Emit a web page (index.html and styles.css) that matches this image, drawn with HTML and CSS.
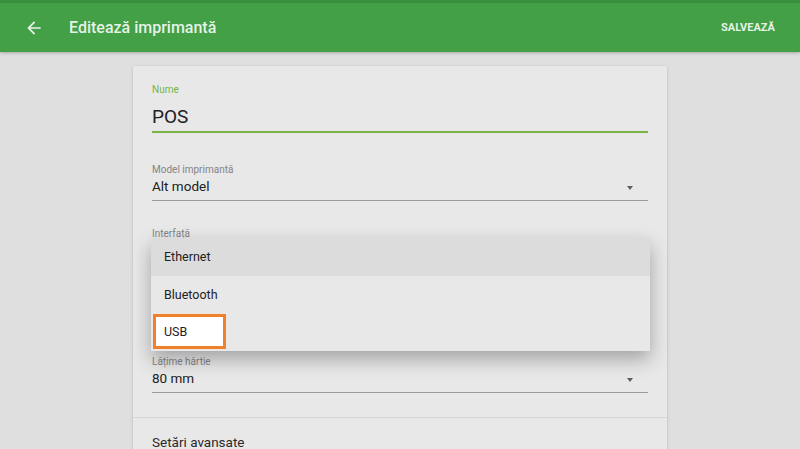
FILE: index.html
```html
<!DOCTYPE html>
<html lang="ro">
<head>
    <meta charset="UTF-8">
    <meta name="viewport" content="width=device-width, initial-scale=1.0">
    <title>Editează imprimantă</title>
    <link rel="stylesheet" href="styles.css">
</head>
<body>
    <header class="appbar">
        <button class="back" aria-label="Înapoi">
            <svg viewBox="0 0 24 24" width="20" height="20"><path d="M20 11H7.83l5.59-5.59L12 4l-8 8 8 8 1.41-1.41L7.83 13H20v-2z" fill="currentColor"/></svg>
        </button>
        <h1>Editează imprimantă</h1>
        <button class="action">Salvează</button>
    </header>

    <main class="page">
        <div class="card">
            <div class="form">
                <div class="field field-text">
                    <label>Nume</label>
                    <div class="value">POS</div>
                </div>
                <div class="field">
                    <label>Model imprimantă</label>
                    <div class="value">Alt model <span class="caret"></span></div>
                </div>
                <!-- select is open, the menu sits on top of it -->
                <div class="field field-open">
                    <label>Interfață</label>
                    <div class="value"><span class="caret"></span></div>
                </div>
                <div class="field">
                    <label>Lățime hârtie</label>
                    <div class="value">80 mm <span class="caret"></span></div>
                </div>
            </div>
            <div class="section">Setări avansate</div>

            <ul class="menu">
                <li class="active">Ethernet</li>
                <li>Bluetooth</li>
                <li class="marked">USB</li>
            </ul>
        </div>
    </main>
</body>
</html>
```

FILE: styles.css
```css
body {
    margin: 0;
    font-family: Roboto, "Noto Sans", sans-serif;
    background: #dfdfdf;
    color: #212121;
    overflow: hidden;
}
.appbar {
    box-sizing: border-box;
    height: 52px;
    display: flex;
    align-items: center;
    background: #43a047;
    border-top: 3px solid #388e3c;
    box-shadow: 0 1px 3px rgba(0, 0, 0, 0.25);
    color: rgba(255, 255, 255, 0.88);
    position: relative;
}
.appbar button {
    background: none;
    border: 0;
    color: inherit;
    font-family: inherit;
    padding: 0;
}
.back {
    display: flex;
    margin-left: 24px;
    width: 20px;
    height: 20px;
}
.appbar h1 {
    flex: 1;
    margin: 0 0 0 25px;
    font-size: 16px;
    font-weight: 500;
}
.action {
    margin-right: 25px;
    font-size: 11px;
    font-weight: 700;
    text-transform: uppercase;
}
.page {
    padding-top: 14px;
}
.card {
    position: relative;
    width: 534px;
    margin: 0 auto;
    background: #e8e8e8;
    box-shadow: 0 1px 3px rgba(0, 0, 0, 0.18);
    min-height: 400px;
}
.form {
    padding: 18px 19px 24px;
}
.field {
    margin-top: 27px;
    border-bottom: 1px solid #9a9a9a;
    padding-bottom: 4px;
}
.field label {
    display: block;
    font-size: 10px;
    line-height: 12px;
    color: #848484;
}
.field .value {
    display: flex;
    align-items: center;
    height: 20px;
    font-size: 13.5px;
    line-height: 20px;
}
.caret {
    margin-left: auto;
    margin-right: 15px;
    margin-top: 4px;
    border-left: 3.5px solid transparent;
    border-right: 3.5px solid transparent;
    border-top: 4px solid #5f5f5f;
}
.field-text {
    margin-top: 0;
    padding-bottom: 0;
    border-bottom: 2px solid #7cb342;
}
.field-text label {
    color: #7cb342;
    margin-bottom: 7px;
}
.field-text .value {
    height: 28px;
    font-size: 19px;
    line-height: 28px;
}
.form .field:nth-child(2) {
    margin-top: 31px;
}
.field-open {
    margin-bottom: 91px;
}
.field-open + .field {
    margin-top: 0;
}
.section {
    border-top: 1px solid #d6d6d6;
    padding: 14px 19px;
    font-size: 13.5px;
    line-height: 20px;
    color: #2a2a2a;
}
.menu {
    position: absolute;
    left: 18px;
    top: 172px;
    width: 499px;
    margin: 0;
    padding: 0;
    list-style: none;
    background: #e8e8e8;
    box-shadow: 0 8px 18px rgba(0, 0, 0, 0.3);
}
.menu li {
    position: relative;
    height: 37.7px;
    line-height: 37.7px;
    padding-left: 13px;
    font-size: 12.5px;
}
.menu li.active {
    background: #dcdcdc;
}
.menu li.marked {
    z-index: 0;
}
.menu li.marked::before {
    content: "";
    position: absolute;
    left: 2px;
    top: 1px;
    width: 67px;
    height: 29px;
    border: 3px solid #f0802a;
    background: #fff;
    z-index: -1;
}
```
